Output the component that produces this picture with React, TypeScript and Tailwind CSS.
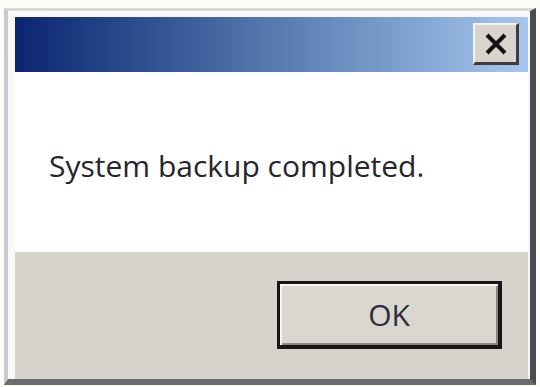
import React from 'react';

const CloseButton: React.FC = () => (
  <button className="flex h-[42px] w-[46px] items-center justify-center bg-[#d8d5cd] border-t-2 border-l-2 border-t-[#f4f3ef] border-l-[#f4f3ef] border-r-[3px] border-b-[3px] border-r-[#3c3c3c] border-b-[#3c3c3c]">
    <svg width="26" height="24" viewBox="0 0 26 24">
      <path d="M4 3 L22 21 M22 3 L4 21" stroke="#111" strokeWidth="4" strokeLinecap="butt" />
    </svg>
  </button>
);

const App: React.FC = () => {
  return (
    <div className="h-[387px] w-[540px] bg-[#fbfbf8] pt-[8px] pl-[4px]">
      <div className="flex h-[377px] w-[532px] flex-col border-l-[4px] border-t-[3px] border-l-[#c9c9cf] border-t-[#d9d9dc] border-r-[6px] border-b-[6px] border-r-[#4a4c52] border-b-[#6a6b6e] bg-[#f8f8f6] pl-[7px] pt-[6px]">
        <div className="flex h-[55px] w-[513px] items-center justify-end bg-gradient-to-r from-[#0c2470] via-[#5679ae] to-[#a7c7ee] pr-[9px]">
          <CloseButton />
        </div>
        <div className="flex h-[181px] w-[513px] items-center bg-white pl-[34px] pt-[8px]">
          <span
            className="text-[30px] text-[#26262c]"
            style={{ fontFamily: '"Open Sans", "Noto Sans", sans-serif' }}
          >
            System backup completed.
          </span>
        </div>
        <div className="flex h-[128px] w-[513px] items-start justify-end bg-[#d6d3cc] pr-[26px] pt-[29px]">
          <button
            className="flex h-[68px] w-[225px] items-center justify-center border-[3px] border-[#161616] border-r-[4px] border-b-[4px] bg-[#d9d7d0] shadow-[inset_2px_2px_0_#f6f5f1,inset_-2px_-2px_0_#8a8882] text-[30px] text-[#2e2e3a]"
            style={{ fontFamily: '"Open Sans", "Noto Sans", sans-serif' }}
          >
            OK
          </button>
        </div>
      </div>
    </div>
  );
};

export default App;
